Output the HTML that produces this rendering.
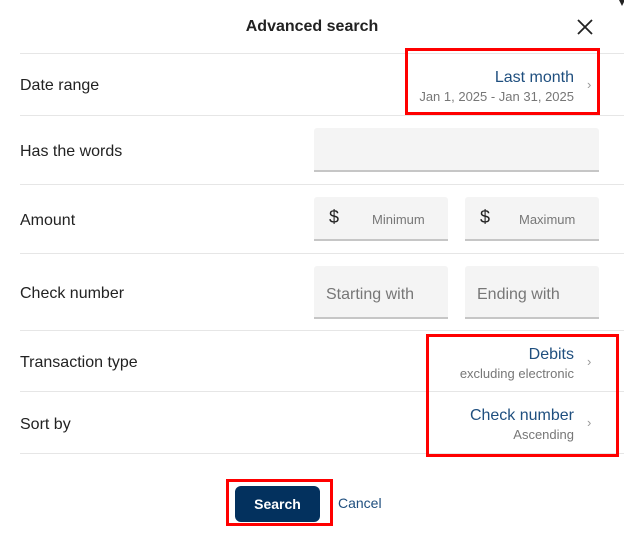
<!DOCTYPE html><html><head><style>
body{margin:0;width:624px;height:544px;background:#fff;font-family:"Liberation Sans",Arial,sans-serif;position:relative;overflow:hidden;color:#222}
.a{position:absolute}
.line{position:absolute;left:20px;right:0;height:1px;background:#e6e6e6}
.lbl{position:absolute;left:20px;font-size:16px;color:#222}
.inp{position:absolute;background:#f4f4f4;border-bottom:2px solid #c6c6c6;border-radius:3px 3px 0 0;box-sizing:border-box;color:#777}
.rt{position:absolute;right:50px;text-align:right;white-space:nowrap}
.m{font-size:16px;color:#1f4f7f}
.s{font-size:13px;color:#777;margin-top:2px}
.ch{position:absolute;left:587px;color:#999;font-size:13px}
.red{position:absolute;border:3px solid #f00;box-sizing:border-box}
</style></head><body>
<div class="a" style="left:0;right:0;top:18px;text-align:center;font-size:16px;font-weight:bold;color:#222">Advanced search</div>
<svg class="a" style="left:577px;top:19px" width="16" height="16"><path d="M1 1L15 15M15 1L1 15" stroke="#222" stroke-width="1.8"/></svg>
<div class="a" style="left:619px;top:0;width:0;height:0;border-left:3px solid transparent;border-right:3px solid transparent;border-top:6px solid #222"></div>
<div class="line" style="top:53px"></div>
<div class="line" style="top:115px"></div>
<div class="line" style="top:184px"></div>
<div class="line" style="top:253px"></div>
<div class="line" style="top:330px"></div>
<div class="line" style="top:391px"></div>
<div class="line" style="top:453px"></div>
<div class="lbl" style="top:77px">Date range</div>
<div class="lbl" style="top:143px">Has the words</div>
<div class="lbl" style="top:212px">Amount</div>
<div class="lbl" style="top:285px">Check number</div>
<div class="lbl" style="top:354px">Transaction type</div>
<div class="lbl" style="top:416px">Sort by</div>
<div class="rt" style="top:69px"><div class="m">Last month</div><div class="s">Jan 1, 2025 - Jan 31, 2025</div></div>
<div class="ch" style="top:77px">›</div>
<div class="rt" style="top:346px"><div class="m">Debits</div><div class="s">excluding electronic</div></div>
<div class="ch" style="top:354px">›</div>
<div class="rt" style="top:407px"><div class="m">Check number</div><div class="s">Ascending</div></div>
<div class="ch" style="top:415px">›</div>
<div class="inp" style="left:314px;top:128px;width:285px;height:44px"></div>
<div class="inp" style="left:314px;top:197px;width:134px;height:44px"><span class="a" style="left:15px;top:10px;font-size:18px;color:#222">$</span><span class="a" style="left:58px;top:15px;font-size:13px">Minimum</span></div>
<div class="inp" style="left:465px;top:197px;width:134px;height:44px"><span class="a" style="left:15px;top:10px;font-size:18px;color:#222">$</span><span class="a" style="left:54px;top:15px;font-size:13px">Maximum</span></div>
<div class="inp" style="left:314px;top:266px;width:134px;height:53px"><span class="a" style="left:12px;top:20px;font-size:16px">Starting with</span></div>
<div class="inp" style="left:465px;top:266px;width:134px;height:53px"><span class="a" style="left:12px;top:20px;font-size:16px">Ending with</span></div>
<div class="a" style="left:235px;top:486px;width:85px;height:36px;background:#03315e;border-radius:6px;color:#fff;font-weight:bold;font-size:14px;text-align:center;line-height:36px">Search</div>
<div class="a" style="left:338px;top:495px;font-size:14px;color:#1f4f7f">Cancel</div>
<div class="red" style="left:405px;top:48px;width:195px;height:67px"></div>
<div class="red" style="left:426px;top:334px;width:193px;height:123px"></div>
<div class="red" style="left:226px;top:479px;width:107px;height:47px"></div>
</body></html>
